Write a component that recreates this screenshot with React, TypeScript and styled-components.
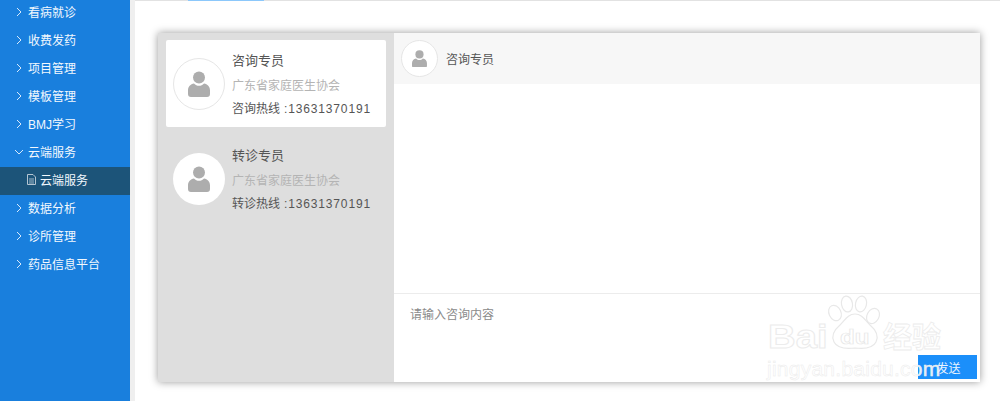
import React from "react";
import styled, { createGlobalStyle } from "styled-components";

const Global = createGlobalStyle`
  html, body { margin: 0; padding: 0; background: #fff; }
  body { font-family: "Liberation Sans", "Noto Sans CJK SC", sans-serif; overflow: hidden; }
`;
const Page = styled.div`
  position: relative; display: flex; width: 1000px; height: 401px; overflow: hidden; background: #fff;
`;
const Sidebar = styled.nav`
  width: 130px; flex: none; background: #197fdd; padding-top: 0;
  border-right: 5px solid #efefef; box-sizing: content-box;
`;
const NavList = styled.ul`
  list-style: none; margin: -1px 0 0; padding: 0;
`;
const NavItem = styled.li<{ $sub?: boolean }>`
  display: flex; align-items: center; height: 28px; color: #f2f8fe; font-size: 12px;
  padding-left: ${(p) => (p.$sub ? "27px" : "15px")};
  background: ${(p) => (p.$sub ? "#1c5479" : "transparent")};
  svg { flex: none; margin-bottom: 3px; }
  span { margin-left: ${(p) => (p.$sub ? "4px" : "5px")}; margin-bottom: 3px; }
`;
const Main = styled.main`
  flex: 1; display: flex; flex-direction: column; min-width: 0; border-top: 1px solid #e2e2e2;
`;
const TabMark = styled.div`
  position: absolute; left: 188px; top: 0; width: 76px; height: 1px; background: #8cc8fb;
`;
const Panel = styled.section`
  display: flex; width: 822px; height: 349px; margin: 32px 0 0 23px;
  box-shadow: 0 0 8px rgba(0,0,0,.4); background: #fff;
`;
const ContactList = styled.div`
  width: 236px; flex: none; background: #dedede; padding: 7px 8px; box-sizing: border-box;
  display: flex; flex-direction: column; gap: 8px;
`;
const Contact = styled.div<{ $active?: boolean }>`
  display: flex; align-items: center; height: 87px; padding-left: 7px; border-radius: 2px;
  background: ${(p) => (p.$active ? "#fff" : "transparent")};
`;
const Avatar = styled.div<{ $size: number; $line?: boolean }>`
  flex: none; width: ${(p) => p.$size}px; height: ${(p) => p.$size}px; border-radius: 50%;
  background: #fff; box-sizing: border-box; display: flex; align-items: center; justify-content: center;
  border: ${(p) => (p.$line ? "1px solid #e6e6e6" : "none")};
`;
const ContactInfo = styled.div`
  margin-left: 7px; padding-top: 3px; display: flex; flex-direction: column; white-space: nowrap;
`;
const Name = styled.div`
  font-size: 13px; line-height: 16px; color: #555; margin-top: -1px;
`;
const Org = styled.div`
  font-size: 12px; line-height: 16px; color: #b4b4b4; margin-top: 9px;
`;
const Hotline = styled.div`
  font-size: 12px; line-height: 16px; color: #555; margin-top: 7px;
`;
const HotlineNumber = styled.span`
  margin-left: 4px; letter-spacing: .85px;
`;
const Chat = styled.div`
  flex: 1; display: flex; flex-direction: column; min-width: 0;
`;
const ChatHeader = styled.header`
  height: 51px; flex: none; background: #f7f7f7; display: flex; align-items: center; padding-left: 7px;
`;
const ChatName = styled.div`
  margin-left: 8px; font-size: 12px; color: #555;
`;
const Messages = styled.div`
  flex: 1; background: #fff;
`;
const Composer = styled.div`
  height: 89px; flex: none; border-top: 1px solid #ececec; padding: 13px 17px 0 16px; position: relative;
  font-size: 12px; line-height: 16px; color: #8a8a8a; box-sizing: border-box;
`;
const SendButton = styled.button`
  position: absolute; right: 3px; bottom: 3px; width: 59px; height: 24px; border: 0; margin: 0;
  padding: 0 0 0 2px; background: #1b8ffa; color: #eaf4ff; font: 12px "Liberation Sans", "Noto Sans CJK SC", sans-serif;
`;
const Watermark = styled.div`
  position: absolute; left: 765px; top: 293px; width: 215px; height: 90px; pointer-events: none;
`;
const Paw = styled.svg`
  position: absolute; left: 0; top: 0;
`;
const WmBig = styled.span`
  position: absolute; left: 3px; top: 26px; font: 700 33px/36px "Liberation Sans", sans-serif;
  color: rgba(255,255,255,.9); -webkit-text-stroke: 1px #ececec;
  transform: scaleX(1.16); transform-origin: left;
`;
const WmDu = styled.span`
  position: absolute; left: 75px; top: 32px; font: 700 21px/24px "Liberation Sans", sans-serif;
  color: rgba(255,255,255,.9); -webkit-text-stroke: .7px #e6e6e6;
  transform: scaleX(1.15); transform-origin: left;
`;
const WmCn = styled.span`
  position: absolute; left: 118px; top: 25px; font: 700 29px/34px "Noto Sans CJK SC", sans-serif;
  color: rgba(255,255,255,.9); -webkit-text-stroke: .8px #ececec; white-space: nowrap;
`;
const WmUrl = styled.span`
  position: absolute; left: 2px; top: 63px; font: 400 21px/26px "Liberation Sans", sans-serif; letter-spacing: .25px;
  color: rgba(255,255,255,.9); -webkit-text-stroke: .5px #ebebeb; white-space: nowrap;
`;

const Chevron = ({ open }: { open?: boolean }) => (
  <svg width="8" height="10" viewBox="0 0 8 10" fill="none" stroke="#d6e9fb" strokeWidth="1">
    {open ? <path d="M0 3l4 4 4-4" /> : <path d="M2 1l4 4-4 4" />}
  </svg>
);
const FileIcon = () => (
  <svg width="9" height="11" viewBox="0 0 9 11" fill="none" stroke="#c6d3dd" strokeWidth=".9">
    <path d="M.5.5H6L8.500 3v7.500H.5z" />
    <path d="M2 5h5M2 7h5M2 9h5" strokeWidth=".8" />
  </svg>
);
const Person = ({ scale }: { scale: number }) => (
  <svg width={22 * scale} height={26 * scale} viewBox="0 0 22 26" fill="#adadad">
    <circle cx="11" cy="6.5" r="6" />
    <path d="M6 12.5c1.500 1.500 3 2.300 5 2.300s3.500-.8 5-2.300c3.500.6 6 3 6 7V23a3 3 0 0 1-3 3H3a3 3 0 0 1-3-3v-3.500c0-4 2.500-6.400 6-7z" />
  </svg>
);

const before = ["看病就诊", "收费发药", "项目管理", "模板管理", "BMJ学习"];
const after = ["数据分析", "诊所管理", "药品信息平台"];
const contacts = [
  { name: "咨询专员", hot: "咨询热线", active: true },
  { name: "转诊专员", hot: "转诊热线", active: false },
];

export default function App() {
  return (
    <Page>
      <Global />
      <Sidebar>
        <NavList>
          {before.map((t) => (
            <NavItem key={t}><Chevron /><span>{t}</span></NavItem>
          ))}
          <NavItem><Chevron open /><span>云端服务</span></NavItem>
          <NavItem $sub><FileIcon /><span>云端服务</span></NavItem>
          {after.map((t) => (
            <NavItem key={t}><Chevron /><span>{t}</span></NavItem>
          ))}
        </NavList>
      </Sidebar>
      <Main>
        <Panel>
          <ContactList>
            {contacts.map((c) => (
              <Contact key={c.name} $active={c.active}>
                <Avatar $size={52} $line={c.active}><Person scale={1} /></Avatar>
                <ContactInfo>
                  <Name>{c.name}</Name>
                  <Org>广东省家庭医生协会</Org>
                  <Hotline>{c.hot}<HotlineNumber>:13631370191</HotlineNumber></Hotline>
                </ContactInfo>
              </Contact>
            ))}
          </ContactList>
          <Chat>
            <ChatHeader>
              <Avatar $size={37} $line><Person scale={0.68} /></Avatar>
              <ChatName>咨询专员</ChatName>
            </ChatHeader>
            <Messages />
            <Composer>
              请输入咨询内容
              <SendButton>发送</SendButton>
            </Composer>
          </Chat>
        </Panel>
      </Main>
      <TabMark />
      <Watermark>
        <Paw width="215" height="60" viewBox="0 0 215 60" fill="none" stroke="#e8e8e8" strokeWidth="1.200">
          <ellipse cx="70" cy="20" rx="6" ry="8" transform="rotate(-25 70 20)" />
          <ellipse cx="82" cy="11" rx="5.500" ry="8" transform="rotate(-10 82 11)" />
          <ellipse cx="96" cy="11" rx="5.500" ry="8" transform="rotate(12 96 11)" />
          <ellipse cx="108" cy="23" rx="6" ry="8" transform="rotate(28 108 23)" />
          <path d="M90 21c7 0 10 6 15 11 7 6 9 11 6 17-3 6-12 7-21 6-9 1-18 0-21-6-3-6-1-11 6-17 5-5 8-11 15-11z" />
        </Paw>
        <WmBig>Bai</WmBig>
        <WmDu>du</WmDu>
        <WmCn>经验</WmCn>
        <WmUrl>jingyan.baidu.com</WmUrl>
      </Watermark>
    </Page>
  );
}
